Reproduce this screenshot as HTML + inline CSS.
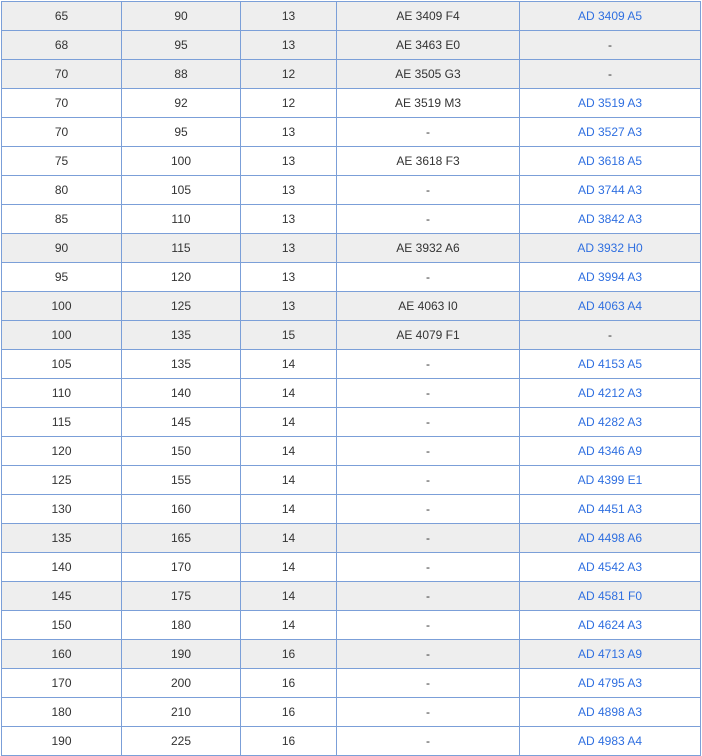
<!DOCTYPE html><html><head><style>
body{margin:0;background:#fff;width:702px;height:754px;overflow:hidden;font-family:"Liberation Sans",Arial,sans-serif;font-size:12px;color:#333}
table{position:absolute;left:1px;top:1px;border-collapse:collapse;table-layout:fixed}
td{border:1px solid #7b9fd8;height:28px;padding:0;text-align:center;line-height:28px}
tr.g td{background:#eeeeee}
a{color:#2f6fe0;text-decoration:none}
</style></head><body>
<table>
<colgroup><col style="width:120px"><col style="width:119px"><col style="width:96px"><col style="width:183px"><col style="width:181px"></colgroup>
<tr class="g"><td>65</td><td>90</td><td>13</td><td>AE 3409 F4</td><td><a>AD 3409 A5</a></td></tr>
<tr class="g"><td>68</td><td>95</td><td>13</td><td>AE 3463 E0</td><td>-</td></tr>
<tr class="g"><td>70</td><td>88</td><td>12</td><td>AE 3505 G3</td><td>-</td></tr>
<tr><td>70</td><td>92</td><td>12</td><td>AE 3519 M3</td><td><a>AD 3519 A3</a></td></tr>
<tr><td>70</td><td>95</td><td>13</td><td>-</td><td><a>AD 3527 A3</a></td></tr>
<tr><td>75</td><td>100</td><td>13</td><td>AE 3618 F3</td><td><a>AD 3618 A5</a></td></tr>
<tr><td>80</td><td>105</td><td>13</td><td>-</td><td><a>AD 3744 A3</a></td></tr>
<tr><td>85</td><td>110</td><td>13</td><td>-</td><td><a>AD 3842 A3</a></td></tr>
<tr class="g"><td>90</td><td>115</td><td>13</td><td>AE 3932 A6</td><td><a>AD 3932 H0</a></td></tr>
<tr><td>95</td><td>120</td><td>13</td><td>-</td><td><a>AD 3994 A3</a></td></tr>
<tr class="g"><td>100</td><td>125</td><td>13</td><td>AE 4063 I0</td><td><a>AD 4063 A4</a></td></tr>
<tr class="g"><td>100</td><td>135</td><td>15</td><td>AE 4079 F1</td><td>-</td></tr>
<tr><td>105</td><td>135</td><td>14</td><td>-</td><td><a>AD 4153 A5</a></td></tr>
<tr><td>110</td><td>140</td><td>14</td><td>-</td><td><a>AD 4212 A3</a></td></tr>
<tr><td>115</td><td>145</td><td>14</td><td>-</td><td><a>AD 4282 A3</a></td></tr>
<tr><td>120</td><td>150</td><td>14</td><td>-</td><td><a>AD 4346 A9</a></td></tr>
<tr><td>125</td><td>155</td><td>14</td><td>-</td><td><a>AD 4399 E1</a></td></tr>
<tr><td>130</td><td>160</td><td>14</td><td>-</td><td><a>AD 4451 A3</a></td></tr>
<tr class="g"><td>135</td><td>165</td><td>14</td><td>-</td><td><a>AD 4498 A6</a></td></tr>
<tr><td>140</td><td>170</td><td>14</td><td>-</td><td><a>AD 4542 A3</a></td></tr>
<tr class="g"><td>145</td><td>175</td><td>14</td><td>-</td><td><a>AD 4581 F0</a></td></tr>
<tr><td>150</td><td>180</td><td>14</td><td>-</td><td><a>AD 4624 A3</a></td></tr>
<tr class="g"><td>160</td><td>190</td><td>16</td><td>-</td><td><a>AD 4713 A9</a></td></tr>
<tr><td>170</td><td>200</td><td>16</td><td>-</td><td><a>AD 4795 A3</a></td></tr>
<tr><td>180</td><td>210</td><td>16</td><td>-</td><td><a>AD 4898 A3</a></td></tr>
<tr><td>190</td><td>225</td><td>16</td><td>-</td><td><a>AD 4983 A4</a></td></tr>
</table>
</body></html>
